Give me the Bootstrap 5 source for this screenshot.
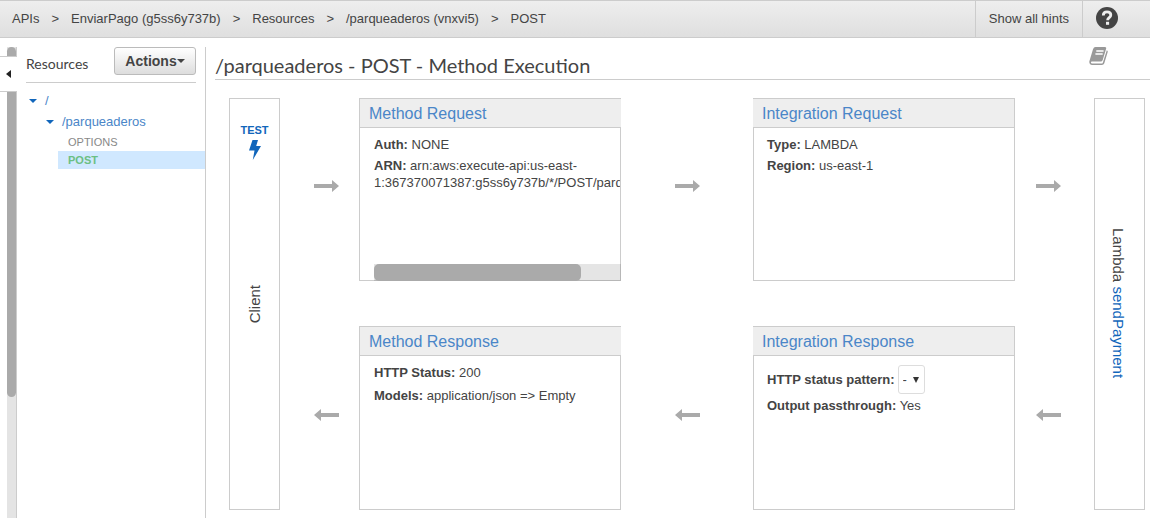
<!DOCTYPE html>
<html lang="en">
<head>
<meta charset="utf-8">
<meta name="viewport" content="width=device-width, initial-scale=1">
<title>Method Execution</title>
<link href="https://cdn.jsdelivr.net/npm/bootstrap@5.3.0/dist/css/bootstrap.min.css" rel="stylesheet">
<style>
  :root { --line: #ccc; --ink: #444; --title-link: #4a86c8; --link: #146eb4; --strong-link: #1166bb; }
  body { font-family: "Liberation Sans", Arial, sans-serif; font-size: 13px; line-height: 17px; color: var(--ink); background: #fff; }
  a { color: var(--link); text-decoration: none; }
  .topbar { height: 38px; background: linear-gradient(#eee, #dfdfdf); border-top: 1px solid var(--line); border-bottom: 1px solid var(--line); }
  .crumbs { --bs-breadcrumb-divider: ">"; --bs-breadcrumb-divider-color: var(--ink); --bs-breadcrumb-item-padding-x: 12px; font-size: 13px; line-height: 17px; padding: 0 0 2px 12px; }
  .crumbs a, .crumbs .breadcrumb-item.active, .hints { color: var(--ink); }
  .topcell { border: 0; border-left: 1px solid var(--line); background: none; padding: 0 13px 2px; }
  .workspace { min-height: 480px; padding-top: 9px; }
  .rail { width: 17px; padding-left: 7px; border-right: 1px solid var(--line); }
  .rail-track { background: #e4e4e4; height: 100%; }
  .rail-thumb { background: #aaa; height: 350px; border-radius: 5px; }
  .collapse-tab { top: 9px; left: 0; width: 17px; height: 36px; padding: 0; background: #fff; border: 1px solid var(--line); border-width: 1px 0; }
  .side { width: 189px; border-right: 1px solid var(--line); }
  .side-head { margin: 0 9px; height: 36px; border-bottom: 1px solid var(--line); }
  .side-head h2 { font: 14px/18px Lato, sans-serif; margin: 0; padding-top: 8px; }
  .actions { display: flex; align-items: center; justify-content: center; width: 82px; height: 28px; padding: 0; font-size: 14px; line-height: 18px; font-weight: bold; color: var(--ink); background: linear-gradient(#fff, #ddd); border: 1px solid #bbb; border-radius: 3px; }
  .actions::after { margin-left: 0; }
  .actions:hover { color: var(--ink); }
  .tree { font-size: 13px; padding-top: 7px; }
  .tree .node { height: 21px; gap: 8px; }
  .tree .node a { color: var(--title-link); }
  .tree .node svg { flex: none; }
  .lvl-root { padding-left: 12px; }
  .lvl-child { padding-left: 29px; }
  .verbs { padding-top: 1px; }
  .verb { display: block; margin-left: 41px; padding-left: 10px; height: 18px; line-height: 18px; font-size: 11px; color: #888; }
  .verb.chosen { background: #d0e8ff; color: #6cbf84; font-weight: bold; }
  .stage { padding-left: 9px; }
  .stage-head { height: 33px; border-bottom: 1px solid var(--line); }
  .stage-head h1 { font: 20px/24px Lato, sans-serif; margin: 0; padding-top: 6px; }
  .docs { border: 0; background: none; padding: 0; margin-right: 41px; height: 19px; line-height: 0; }
  .flow { display: grid; grid-template-columns: 51px 79fr 262fr 132fr 262fr 79fr 51px; grid-template-rows: 183px 184px; row-gap: 45px; margin: 18px 5px 8px 14px; }
  .pillar { grid-row: 1 / 3; border: 1px solid var(--line); font-size: 15px; line-height: 20px; }
  .pillar-client { grid-column: 1; }
  .pillar-lambda { grid-column: 7; padding: 0 3px 2px 0; }
  .sideways { writing-mode: vertical-rl; }
  .upward { transform: rotate(180deg); }
  .test { top: 24px; left: 0; right: 0; font-size: 11px; line-height: 14px; font-weight: bold; color: var(--strong-link); }
  .test svg { margin-top: 3px; }
  .pillar-lambda a { color: var(--strong-link); }
  .hop { display: flex; align-items: center; justify-content: center; padding-bottom: 7px; }
  .hop-in { padding-left: 13px; }
  .hop-out { padding-right: 13px; }
  .step { display: flex; flex-direction: column; min-width: 0; position: relative; }
  .step h3 { font-size: 16px; line-height: 20px; font-weight: normal; margin: 0; height: 30px; padding: 5px 9px; background: #eee; border: 1px solid var(--line); }
  .step h3 a { color: var(--title-link); }
  .step-left h3 { border-right: 0; }
  .step-right h3 { border-left: 0; }
  .step-body { flex: 1; min-height: 0; border: 1px solid var(--line); border-top: 0; padding: 8px 0 0 14px; overflow: hidden; }
  .step-right .step-body { padding-left: 13px; }
  .step-body p { margin: 0 0 4px; }
  .step-body .roomy { margin-bottom: 6px; }
  .step-body .picker { gap: 3px; margin-bottom: 3px; padding-top: 1px; }
  .scroll-x { left: 15px; right: 0; bottom: 0; height: 17px; background: rgba(0,0,0,.1); }
  .scroll-x span { display: block; width: 84%; height: 17px; border-radius: 5px; background: #aaa; }
  .pattern { appearance: none; width: 27px; height: 29px; padding: 0 0 0 4px; color: var(--ink); font-size: 13px; border: 1px solid #ddd; border-radius: 3px; background: #fff url("data:image/svg+xml,%3Csvg xmlns='http://www.w3.org/2000/svg' viewBox='0 0 6 6'%3E%3Cpath d='M0 0h6L3 6z' fill='%23333'/%3E%3C/svg%3E") no-repeat right 5px center / 6px 6px; }
</style>
</head>
<body>
<svg width="0" height="0" class="position-absolute" aria-hidden="true">
  <symbol id="arrow" viewBox="0 0 25 12"><path d="M0 4h18V0l7 6-7 6V8H0z" fill="#aaa"/></symbol>
  <symbol id="arrow-back" viewBox="0 0 25 12"><path d="M25 4H7V0L0 6l7 6V8h18z" fill="#aaa"/></symbol>
  <symbol id="twist" viewBox="0 0 8 4"><path d="M0 0h8L4 4z" fill="#1166bb"/></symbol>
</svg>

<header class="topbar d-flex">
  <nav class="flex-grow-1 d-flex align-items-center" aria-label="breadcrumb">
    <ol class="breadcrumb crumbs mb-0 flex-nowrap text-nowrap">
      <li class="breadcrumb-item"><a href="#">APIs</a></li>
      <li class="breadcrumb-item"><a href="#">EnviarPago (g5ss6y737b)</a></li>
      <li class="breadcrumb-item"><a href="#">Resources</a></li>
      <li class="breadcrumb-item"><a href="#">/parqueaderos (vnxvi5)</a></li>
      <li class="breadcrumb-item active" aria-current="page">POST</li>
    </ol>
  </nav>
  <button type="button" class="topcell hints text-nowrap">Show all hints</button>
  <button type="button" class="topcell pe-4 me-2" aria-label="Help">
    <svg class="d-block" width="22" height="22" viewBox="0 0 22 22"><circle cx="11" cy="11" r="11" fill="#444"/><path d="M7.300 8.400C7.300 6 8.800 4.900 11 4.900s3.800 1.100 3.800 3.100c0 2.600-3.200 2.600-3.200 5.200" fill="none" stroke="#eee" stroke-width="2.800"/><path d="M10 14.800h3.100v3H10z" fill="#eee"/></svg>
  </button>
</header>

<div class="workspace d-flex position-relative">
  <div class="rail flex-shrink-0"><div class="rail-track"><div class="rail-thumb"></div></div></div>
  <div class="position-absolute start-0">
    <button type="button" class="collapse-tab position-absolute" aria-label="Collapse resources">
      <svg width="5" height="8" viewBox="0 0 5 8" class="d-block mx-auto"><path d="M5 0v8L0 4z" fill="#222"/></svg>
    </button>
  </div>

  <aside class="side flex-shrink-0">
    <div class="side-head d-flex justify-content-between align-items-start">
      <h2>Resources</h2>
      <button type="button" class="btn actions dropdown-toggle">Actions</button>
    </div>
    <nav class="tree" aria-label="Resource tree">
      <div class="node lvl-root d-flex align-items-center"><svg width="8" height="4"><use href="#twist"/></svg><a href="#">/</a></div>
      <div class="node lvl-child d-flex align-items-center"><svg width="8" height="4"><use href="#twist"/></svg><a href="#">/parqueaderos</a></div>
      <div class="verbs">
        <a href="#" class="verb">OPTIONS</a>
        <a href="#" class="verb chosen">POST</a>
      </div>
    </nav>
  </aside>

  <main class="stage flex-grow-1">
    <div class="stage-head d-flex justify-content-between align-items-start">
      <h1>/parqueaderos - POST - Method Execution</h1>
      <button type="button" class="docs" aria-label="Documentation">
        <svg width="20" height="19" viewBox="0 0 20 19"><path d="M6.500 0H16q1.600 0 1.200 1.600L13.700 13q-.5 1.600-2 1.600H3q-1.200 0-1.100 1 .1 1 1.300 1h9.300q1 0 1.400-1.200L17.800 3.200q1.300.5.9 1.900l-3.400 11.200q-.6 1.800-2.400 1.800H3.200Q.2 18 .3 14.600L4 2.200Q4.700 0 6.500 0z" fill="#999"/><path d="M7.300 4h7.300M6.400 7h7.300" stroke="#fff" stroke-width="1.300"/></svg>
      </button>
    </div>

    <div class="flow">
      <section class="pillar pillar-client position-relative d-flex align-items-center justify-content-center">
        <a href="#" class="test position-absolute text-center">TEST
          <svg class="d-block mx-auto" width="12" height="20" viewBox="0 0 12 20"><path d="M3.500 0H9L7.200 6H12L3.800 20 5.500 10.500H0z" fill="#1166bb"/></svg>
        </a>
        <span class="sideways upward">Client</span>
      </section>

      <div class="hop hop-in"><svg width="25" height="12"><use href="#arrow"/></svg></div>

      <section class="step step-left">
        <h3><a href="#">Method Request</a></h3>
        <div class="step-body">
          <p><b>Auth:</b> NONE</p>
          <p><b>ARN:</b> arn:aws:execute-api:us-east-<br><span class="text-nowrap">1:367370071387:g5ss6y737b/*/POST/parqueaderos</span></p>
        </div>
        <div class="scroll-x position-absolute"><span></span></div>
      </section>

      <div class="hop"><svg width="25" height="12"><use href="#arrow"/></svg></div>

      <section class="step step-right">
        <h3><a href="#">Integration Request</a></h3>
        <div class="step-body">
          <p><b>Type:</b> LAMBDA</p>
          <p><b>Region:</b> us-east-1</p>
        </div>
      </section>

      <div class="hop hop-out"><svg width="25" height="12"><use href="#arrow"/></svg></div>

      <section class="pillar pillar-lambda d-flex align-items-center justify-content-center">
        <span class="sideways">Lambda <a href="#">sendPayment</a></span>
      </section>

      <div class="hop hop-in"><svg width="25" height="12"><use href="#arrow-back"/></svg></div>

      <section class="step step-left">
        <h3><a href="#">Method Response</a></h3>
        <div class="step-body">
          <p class="roomy"><b>HTTP Status:</b> 200</p>
          <p><b>Models:</b> application/json =&gt; Empty</p>
        </div>
      </section>

      <div class="hop"><svg width="25" height="12"><use href="#arrow-back"/></svg></div>

      <section class="step step-right">
        <h3><a href="#">Integration Response</a></h3>
        <div class="step-body">
          <p class="picker d-flex align-items-center"><label for="pattern"><b>HTTP status pattern:</b></label>
            <select id="pattern" class="pattern"><option>-</option></select></p>
          <p><b>Output passthrough:</b> Yes</p>
        </div>
      </section>

      <div class="hop hop-out"><svg width="25" height="12"><use href="#arrow-back"/></svg></div>
    </div>
  </main>
</div>
<script src="https://cdn.jsdelivr.net/npm/bootstrap@5.3.0/dist/js/bootstrap.bundle.min.js"></script>
</body>
</html>
